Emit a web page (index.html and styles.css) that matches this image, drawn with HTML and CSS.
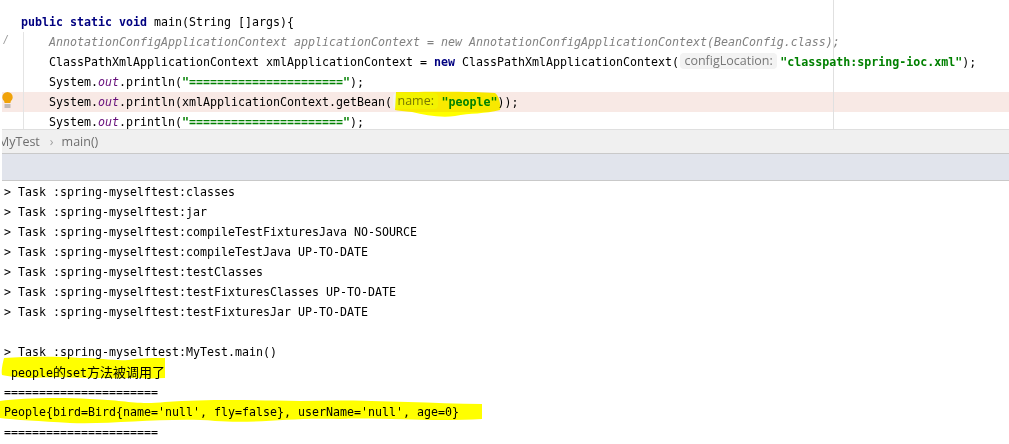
FILE: index.html
```html
<!DOCTYPE html>
<html lang="en">
<head>
<meta charset="utf-8">
<title>MyTest</title>
<link rel="stylesheet" href="styles.css">
</head>
<body>
<div class="page">
  <section class="editor">
    <div class="margin-line"></div>
    <div class="row first"><div class="gutter"></div><pre class="code"><b class="kw">public static void</b> main(String []args){</pre></div>
    <div class="row"><div class="gutter"><span class="fold">/</span></div><pre class="code comment">    AnnotationConfigApplicationContext applicationContext = new AnnotationConfigApplicationContext(BeanConfig.class);</pre></div>
    <div class="row"><div class="gutter"></div><pre class="code">    ClassPathXmlApplicationContext xmlApplicationContext = <b class="kw">new</b> ClassPathXmlApplicationContext(<span class="hint boxed">configLocation:</span><b class="str">"classpath:spring-ioc.xml"</b>);</pre></div>
    <div class="row"><div class="gutter"></div><pre class="code">    System.<i class="field">out</i>.println(<b class="str">"======================"</b>);</pre></div>
    <div class="row current">
      <div class="gutter">
        <svg class="bulb" width="11" height="16" viewBox="0 0 11 16" aria-hidden="true">
          <path d="M5.5 0a5.2 5.2 0 0 1 5.2 5.2c0 2.1-1.2 3-1.9 4l-.4 1.8H2.6l-.4-1.8c-.7-1-1.9-1.9-1.9-4A5.2 5.2 0 0 1 5.5 0z" fill="#f0a30a"/>
          <path d="M2.5 13h6M2.5 15h6" stroke="#8a8a8a" stroke-width="1" fill="none"/>
        </svg>
      </div>
      <pre class="code">    System.<i class="field">out</i>.println(xmlApplicationContext.getBean(<span class="hint boxed">name:</span><b class="str">"people"</b>));</pre>
    </div>
    <div class="row"><div class="gutter"></div><pre class="code">    System.<i class="field">out</i>.println(<b class="str">"======================"</b>);</pre></div>
  </section>
  <nav class="crumbs"><span class="crumb-first">MyTest</span><span class="crumb-sep">›</span><span>main()</span></nav>
  <div class="tool-header"></div>
  <section class="console">
    <pre class="out">&gt; Task :spring-myselftest:classes</pre>
    <pre class="out">&gt; Task :spring-myselftest:jar</pre>
    <pre class="out">&gt; Task :spring-myselftest:compileTestFixturesJava NO-SOURCE</pre>
    <pre class="out">&gt; Task :spring-myselftest:compileTestJava UP-TO-DATE</pre>
    <pre class="out">&gt; Task :spring-myselftest:testClasses</pre>
    <pre class="out">&gt; Task :spring-myselftest:testFixturesClasses UP-TO-DATE</pre>
    <pre class="out">&gt; Task :spring-myselftest:testFixturesJar UP-TO-DATE</pre>
    <pre class="out"> </pre>
    <pre class="out">&gt; Task :spring-myselftest:MyTest.main()</pre>
    <pre class="out"> people<span class="cjk">的</span>set<span class="cjk">方法被调用了</span></pre>
    <pre class="out">======================</pre>
    <pre class="out">People{bird=Bird{name='null', fly=false}, userName='null', age=0}</pre>
    <pre class="out">======================</pre>
  </section>
  <svg class="marker" width="1009" height="444" viewBox="0 0 1009 444" aria-hidden="true">
    <path d="M396 92C420 92 470 91 495 93C499 96 501 104 500 110C485 114 470 113 455 116C440 118 425 115 412 112C405 111 398 111 395 110z"/>
    <path d="M4 358C25 357 50 356 80 358C100 358 115 361 128 360C140 358 155 358 165 358L165 378C150 379 135 378 128 378C95 379 60 376 30 378C20 378 8 376 2 375C1 370 3 362 4 358z"/>
    <path d="M0 401C20 398 60 397 90 399C125 400 135 405 165 402C210 399 250 400 300 401C360 399 420 403 482 404L482 419C430 422 380 417 340 419C290 417 260 424 215 421C170 417 110 425 70 423C40 421 15 420 0 418z"/>
  </svg>
</div>
</body>
</html>
```
FILE: styles.css
```css
* {
  box-sizing: border-box;
}

html,
body {
  margin: 0;
  background: #ffffff;
}

.page {
  position: relative;
  width: 1009px;
  height: 444px;
  padding-left: 2px;
  overflow: hidden;
}

pre {
  margin: 0;
  font: inherit;
  white-space: pre;
}

.editor {
  position: relative;
  height: 129px;
  padding-top: 12px;
  overflow: hidden;
  font-family: "DejaVu Sans Mono", monospace;
  font-size: 11.63px;
  color: #000000;
}

.margin-line {
  position: absolute;
  top: 0;
  bottom: 0;
  left: 831px;
  width: 1px;
  background: #e0e0e0;
}

.row {
  display: flex;
  height: 20px;
  line-height: 20px;
}

.row.current {
  background: #f8e9e5;
}

.gutter {
  position: relative;
  flex: none;
  width: 19px;
}

.row:not(.first) .gutter::after {
  content: "";
  position: absolute;
  top: 0;
  bottom: 0;
  left: 21px;
  width: 1px;
  background: #e4e4e4;
}

.fold {
  position: absolute;
  top: -2px;
  left: 1px;
  font-size: 10px;
  font-style: italic;
  color: #9a9a9a;
}

.bulb {
  position: absolute;
  top: 0;
  left: 0;
}

.code {
  position: relative;
  line-height: 20px;
}

.comment {
  font-style: italic;
  color: #808080;
}

.kw {
  color: #000080;
  font-weight: 700;
}

.str {
  color: #008000;
  font-weight: 700;
}

.field {
  color: #660e7a;
  font-style: italic;
}

.hint {
  font-family: "Open Sans", sans-serif;
  font-size: 12.5px;
  color: #787878;
}

.boxed {
  display: inline-block;
  height: 16px;
  margin: 0 3px 0 1px;
  padding: 0 4.5px;
  border-radius: 4px;
  background: #f3f3f3;
  line-height: 15px;
  vertical-align: 1px;
}

.crumbs {
  display: flex;
  align-items: center;
  height: 25px;
  overflow: hidden;
  border-top: 1px solid #dfdfdf;
  border-bottom: 1px solid #c9c9c9;
  background: #f0f0f0;
  font-family: "Open Sans", sans-serif;
  font-size: 12.5px;
  color: #6e6e6e;
}

.crumb-first {
  margin-left: -4px;
}

.crumb-sep {
  margin: 0 8px 0 10px;
  color: #a0a0a0;
}

.tool-header {
  height: 27px;
  border-bottom: 1px solid #c9c9c9;
  background: #e1e4ec;
}

.console {
  padding: 1px 0 0 2px;
  font-family: "DejaVu Sans Mono", monospace;
  font-size: 11.63px;
  color: #000000;
}

.out {
  height: 20px;
  line-height: 20px;
}

.cjk {
  font-family: "Noto Sans CJK SC", sans-serif;
  font-size: 13px;
}

.marker {
  position: absolute;
  top: 0;
  left: 0;
  fill: #ffff00;
  mix-blend-mode: multiply;
  pointer-events: none;
}
```
